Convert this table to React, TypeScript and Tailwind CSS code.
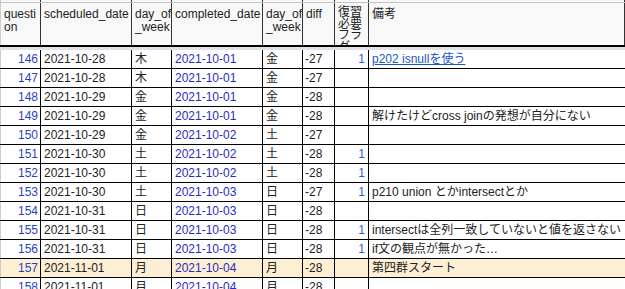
const cols = ["w-[41px]", "w-[91px]", "w-[40px]", "w-[91px]", "w-[40px]", "w-[32px]", "w-[34px]", "flex-1"];

interface Row {
  id: number;
  scheduled: string;
  dow1: string;
  completed: string;
  dow2: string;
  diff: number;
  flag?: number;
  note?: string;
  link?: boolean;
  highlight?: boolean;
}

const rows: Row[] = [
  { id: 146, scheduled: "2021-10-28", dow1: "木", completed: "2021-10-01", dow2: "金", diff: -27, flag: 1, note: "p202 isnullを使う", link: true },
  { id: 147, scheduled: "2021-10-28", dow1: "木", completed: "2021-10-01", dow2: "金", diff: -27 },
  { id: 148, scheduled: "2021-10-29", dow1: "金", completed: "2021-10-01", dow2: "金", diff: -28 },
  { id: 149, scheduled: "2021-10-29", dow1: "金", completed: "2021-10-01", dow2: "金", diff: -28, note: "解けたけどcross joinの発想が自分にない" },
  { id: 150, scheduled: "2021-10-29", dow1: "金", completed: "2021-10-02", dow2: "土", diff: -27 },
  { id: 151, scheduled: "2021-10-30", dow1: "土", completed: "2021-10-02", dow2: "土", diff: -28, flag: 1 },
  { id: 152, scheduled: "2021-10-30", dow1: "土", completed: "2021-10-02", dow2: "土", diff: -28, flag: 1 },
  { id: 153, scheduled: "2021-10-30", dow1: "土", completed: "2021-10-03", dow2: "日", diff: -27, flag: 1, note: "p210 union とかintersectとか" },
  { id: 154, scheduled: "2021-10-31", dow1: "日", completed: "2021-10-03", dow2: "日", diff: -28 },
  { id: 155, scheduled: "2021-10-31", dow1: "日", completed: "2021-10-03", dow2: "日", diff: -28, flag: 1, note: "intersectは全列一致していないと値を返さない" },
  { id: 156, scheduled: "2021-10-31", dow1: "日", completed: "2021-10-03", dow2: "日", diff: -28, flag: 1, note: "if文の観点が無かった…" },
  { id: 157, scheduled: "2021-11-01", dow1: "月", completed: "2021-10-04", dow2: "月", diff: -28, note: "第四群スタート", highlight: true },
  { id: 158, scheduled: "2021-11-01", dow1: "月", completed: "2021-10-04", dow2: "月", diff: -28 },
];

const headers = ["questi on", "scheduled_date", "day_of _week", "completed_date", "day_of _week", "diff", "復習必要フラグ", "備考"];

export default function App() {
  return (
    <div
      className="w-[625px] h-[289px] overflow-hidden bg-white text-[12px] text-[#222]"
      style={{ fontFamily: '"Liberation Sans", Arial, "Noto Sans CJK JP", sans-serif' }}
    >
      {/* sliver of the row above the header */}
      <div className="flex h-[2px] bg-[#f8f8f8]">
        {cols.map((c, i) => (
          <div key={i} className={`${c} shrink-0 border-r border-[#333] ${i === 0 ? "border-l border-l-[#ccc]" : ""}`} />
        ))}
      </div>

      {/* header */}
      <div className="flex h-[45px] bg-[#f8f8f8] border-t border-[#c4c4c4] border-b-2 border-b-black">
        {headers.map((h, i) => (
          <div
            key={i}
            className={`${cols[i]} shrink-0 overflow-hidden border-r border-[#333] px-[3px] leading-[12.5px] ${i === 6 ? "pt-[3px]" : "pt-[5px]"} ${i === 0 ? "border-l border-l-[#ccc]" : ""}`}
          >
            {i === 0 ? (
              <>questi<br />on</>
            ) : i === 2 || i === 4 ? (
              <>day_of<br />_week</>
            ) : i === 6 ? (
              <span className="block w-[26px] break-all leading-[11.5px] pt-[1px]">復習必要フラグ</span>
            ) : (
              h
            )}
          </div>
        ))}
      </div>

      <div className="h-[3px] bg-[#dfe0e8]" />

      {rows.map((r) => (
        <div key={r.id} className={`flex h-[19px] border-b border-black leading-[18px] ${r.highlight ? "bg-[#fcefd3]" : "bg-white"}`}>
          <div className={`${cols[0]} shrink-0 border-r border-black border-l border-l-[#ccc] pr-[2px] text-right text-[#2b3fc4]`}>{r.id}</div>
          <div className={`${cols[1]} shrink-0 border-r border-black pl-[3px]`}>{r.scheduled}</div>
          <div className={`${cols[2]} shrink-0 border-r border-black pl-[3px]`}>{r.dow1}</div>
          <div className={`${cols[3]} shrink-0 border-r border-black pl-[3px] text-[#2a2abf]`}>{r.completed}</div>
          <div className={`${cols[4]} shrink-0 border-r border-black pl-[3px]`}>{r.dow2}</div>
          <div className={`${cols[5]} shrink-0 border-r border-black pl-[2px]`}>{r.diff}</div>
          <div className={`${cols[6]} shrink-0 border-r border-black pr-[3px] text-right text-[#2563d4]`}>{r.flag ?? ""}</div>
          <div className={`${cols[7]} whitespace-nowrap overflow-hidden pl-[3px]`}>
            {r.link ? <span className="text-[#1a56c8] underline">{r.note}</span> : r.note}
          </div>
        </div>
      ))}
    </div>
  );
}
